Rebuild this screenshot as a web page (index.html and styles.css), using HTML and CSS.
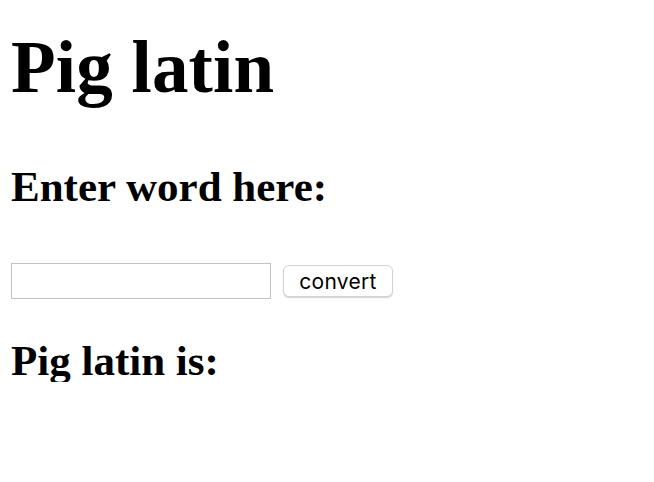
FILE: index.html
```html
<!DOCTYPE html>
<html>
<head>
<meta charset="utf-8">
<title>Pig latin</title>
<link rel="stylesheet" href="styles.css">
</head>
<body>
<h1 class="title">Pig latin</h1>
<h2 class="heading prompt">Enter word here:</h2>
<div class="form-row">
  <input class="word-input" type="text">
  <button class="convert-btn" type="button">convert</button>
</div>
<h2 class="heading result">Pig latin is:</h2>
</body>
</html>
```
FILE: styles.css
```css
html, body {
  background: #ffffff;
}
body {
  margin: 0;
  padding: 0 11px;
  font-family: "Liberation Serif", "Times New Roman", serif;
  color: #000;
}
.title {
  margin: 31px 0 0;
  font-size: 73px;
  line-height: 73px;
  font-weight: bold;
  letter-spacing: 0.2px;
}
.heading {
  margin: 0;
  font-size: 43px;
  line-height: 42px;
  font-weight: bold;
}
.prompt {
  margin-top: 62px;
}
.form-row {
  display: flex;
  align-items: center;
  gap: 12px;
  margin-top: 55px;
}
.word-input {
  box-sizing: border-box;
  width: 260px;
  height: 36px;
  margin: 0;
  padding: 0 4px;
  border: 1px solid #c3c3c3;
  border-radius: 0;
  background: #fff;
  outline: none;
}
.convert-btn {
  box-sizing: border-box;
  width: 110px;
  height: 32px;
  margin: 0;
  padding: 1px 0 0;
  border: 1px solid #d2d2d2;
  border-radius: 6px;
  background: #fff;
  box-shadow: 0 1px 1px rgba(0, 0, 0, 0.18);
  font-family: Inter, "Noto Sans", sans-serif;
  font-size: 21px;
  letter-spacing: 0.3px;
  color: #000;
}
.result {
  margin-top: 41px;
}
```
